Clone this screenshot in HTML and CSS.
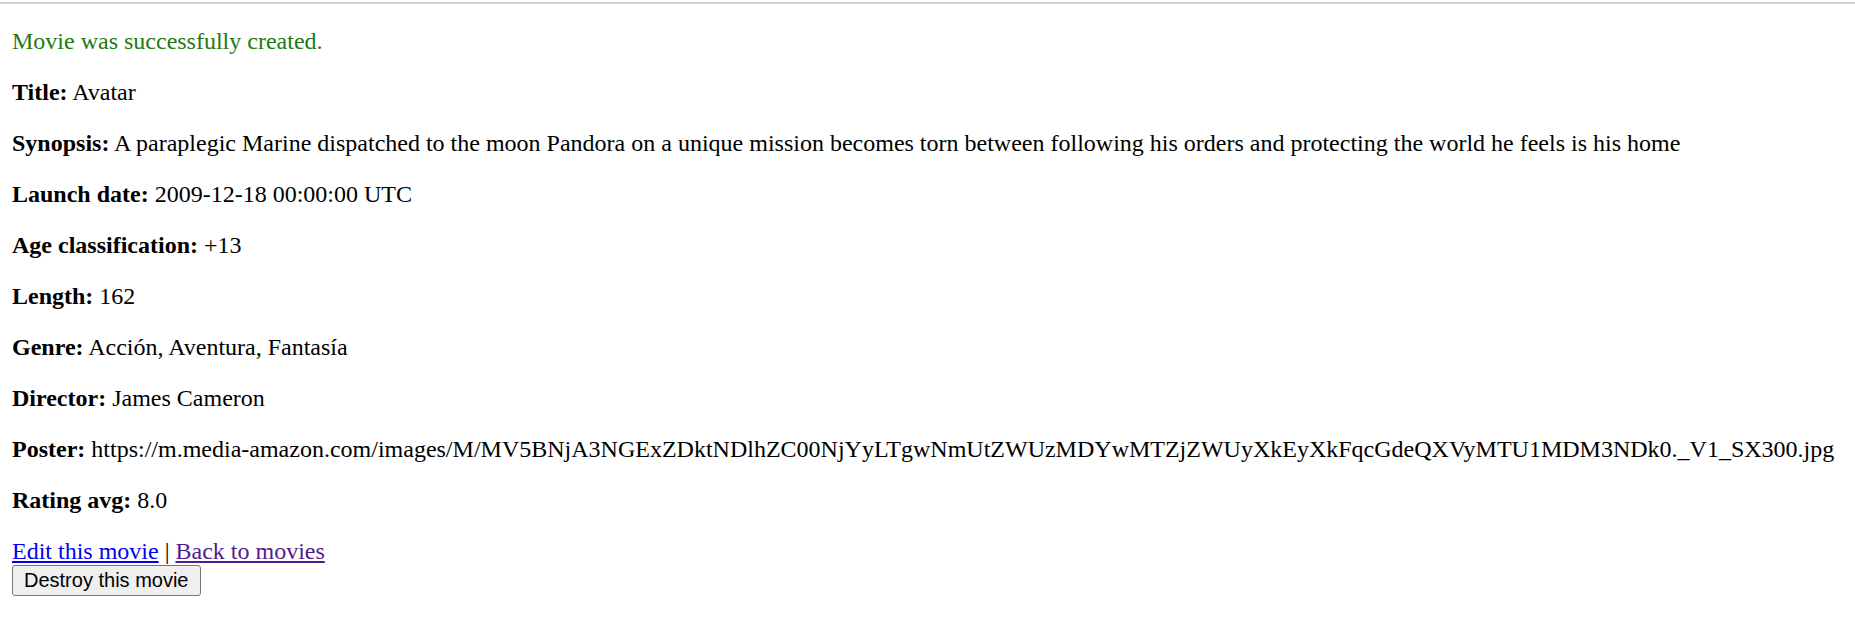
FILE: index.html
```html
<!DOCTYPE html>
<html>
<head>
<meta charset="utf-8">
<title>Movie</title>
<link rel="stylesheet" href="styles.css">
</head>
<body>
<div class="topline"></div>
<main class="page">
<p class="notice">Movie was successfully created.</p>
<div class="movie">
<p><strong>Title:</strong> Avatar</p>
<p><strong>Synopsis:</strong> A paraplegic Marine dispatched to the moon Pandora on a unique mission becomes torn between following his orders and protecting the world he feels is his home</p>
<p><strong>Launch date:</strong> 2009-12-18 00:00:00 UTC</p>
<p><strong>Age classification:</strong> +13</p>
<p><strong>Length:</strong> 162</p>
<p><strong>Genre:</strong> Acción, Aventura, Fantasía</p>
<p><strong>Director:</strong> James Cameron</p>
<p><strong>Poster:</strong> https://m.media-amazon.com/images/M/MV5BNjA3NGExZDktNDlhZC00NjYyLTgwNmUtZWUzMDYwMTZjZWUyXkEyXkFqcGdeQXVyMTU1MDM3NDk0._V1_SX300.jpg</p>
<p><strong>Rating avg:</strong> 8.0</p>
</div>
<div class="actions">
<a href="#edit" class="link">Edit this movie</a> | <a href="#back" class="link visited">Back to movies</a>
<form class="destroy"><button type="button" class="btn">Destroy this movie</button></form>
</div>
</main>
</body>
</html>
```
FILE: styles.css
```css
html, body {
  margin: 0;
  padding: 0;
  background: #fff;
}
body {
  font-family: "Liberation Serif", "Times New Roman", serif;
  font-size: 24px;
  color: #000;
}
.topline {
  height: 2px;
  margin-top: 2px;
  background: #cfcfcf;
}
.page {
  padding: 0 12px 12px 12px;
}
.page p {
  margin: 24px 0;
}
.notice {
  color: #1f7a12;
}
.movie p {
  margin: 24px 0;
}
.link {
  color: #0000ee;
  text-decoration: underline;
}
.link.visited {
  color: #551a8b;
}
.destroy {
  margin: 0;
}
.btn {
  font-family: "Liberation Sans", Arial, sans-serif;
  font-size: 20px;
  line-height: 23px;
  color: #000;
  background: #efefef;
  border: 1px solid #767676;
  border-radius: 3px;
  padding: 3px 11px;
  margin: 0;
}
```
